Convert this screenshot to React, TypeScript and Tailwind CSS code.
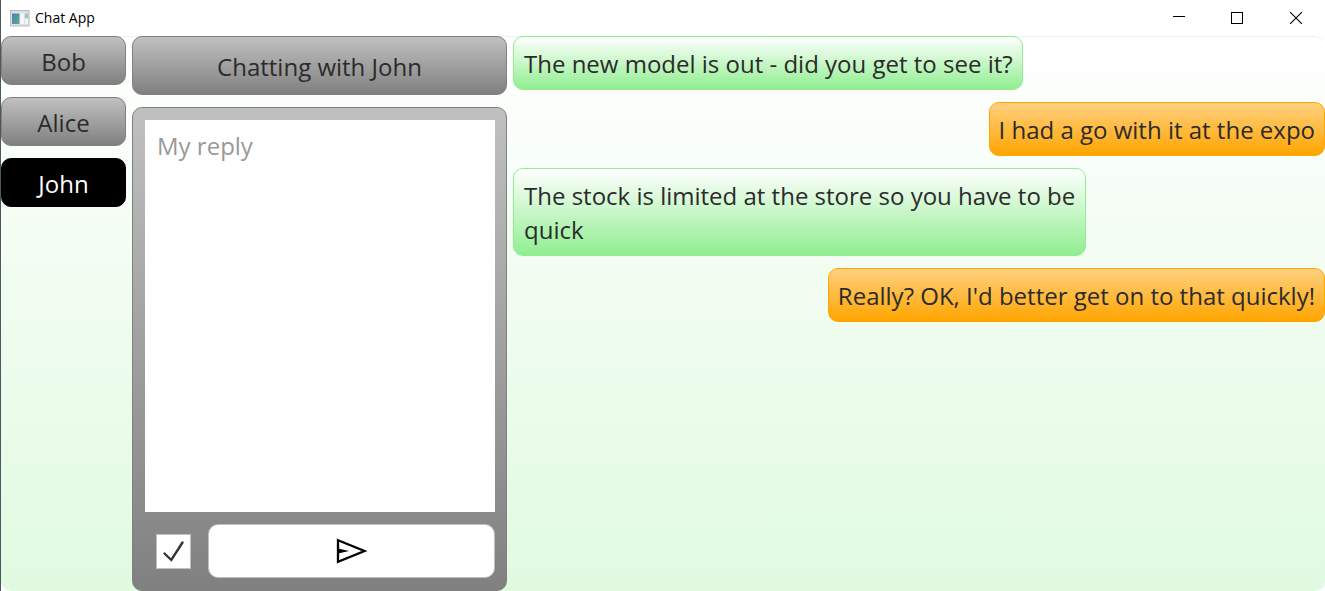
import { useState } from "react";

type Message = { from: "them" | "me"; text: string };

const contacts = ["Bob", "Alice", "John"];

const messages: Message[] = [
  { from: "them", text: "The new model is out - did you get to see it?" },
  { from: "me", text: "I had a go with it at the expo" },
  { from: "them", text: "The stock is limited at the store so you have to be quick" },
  { from: "me", text: "Really? OK, I'd better get on to that quickly!" },
];

function AppIcon() {
  return (
    <svg width="20" height="17" viewBox="0 0 20 17" aria-hidden="true">
      <defs>
        <linearGradient id="pane" x1="0" y1="0" x2="1" y2="1">
          <stop offset="0" stopColor="#4a80b4" />
          <stop offset="1" stopColor="#55b08a" />
        </linearGradient>
      </defs>
      <rect x="0.5" y="0.5" width="18.5" height="15.5" fill="#dfe0e4" stroke="#b9bbc0" />
      <rect x="2" y="3.5" width="7.5" height="10.5" fill="url(#pane)" />
      <rect x="10" y="3.5" width="4" height="10.5" fill="#f5f5f5" />
      <rect x="15" y="3.5" width="3" height="5" fill="#9fc6c4" />
      <rect x="15" y="8.5" width="3" height="5.5" fill="#f5f5f5" />
    </svg>
  );
}

function TitleBar() {
  return (
    <header className="flex h-9 items-center bg-white pl-[9px]">
      <AppIcon />
      <h1 className="ml-[5px] flex-1 text-[14px] leading-5 text-black">Chat App</h1>
      <div className="flex h-full">
        <button aria-label="Minimize" className="grid w-[58px] place-items-center">
          <svg width="12" height="12" shapeRendering="crispEdges">
            <path d="M0 4.5H12" stroke="#000" />
          </svg>
        </button>
        <button aria-label="Maximize" className="grid w-[58px] place-items-center">
          <svg width="12" height="12" shapeRendering="crispEdges">
            <rect x="0.5" y="0.5" width="11" height="11" fill="none" stroke="#000" />
          </svg>
        </button>
        <button aria-label="Close" className="grid w-[59px] place-items-center">
          <svg width="12" height="12">
            <path d="M0 0L12 12M12 0L0 12" stroke="#000" strokeWidth="1.1" />
          </svg>
        </button>
      </div>
    </header>
  );
}

export default function App() {
  const [active, setActive] = useState("John");
  const [reply, setReply] = useState("");
  const [checked, setChecked] = useState(true);

  return (
    <div className="flex min-h-screen flex-col border-l border-[#4a5862] bg-white font-['Open_Sans','Noto_Sans',sans-serif] text-[#2b2b2b]">
      <TitleBar />
      <main className="grid flex-1 grid-cols-[125px_375px_minmax(0,1fr)] gap-x-[6px] rounded-[10px] border-t border-[#e0fae0] bg-linear-to-b/srgb from-white to-[#e0fae0] text-2xl leading-[34px]">
        <nav aria-label="Contacts" className="-mt-px flex flex-col gap-3">
          {contacts.map((name) => (
            <button
              key={name}
              onClick={() => setActive(name)}
              className={
                name === active
                  ? "h-[49px] rounded-[10px] border border-black bg-black pt-[2px] text-white"
                  : "h-[49px] rounded-[10px] border border-[#808080] bg-linear-to-b/srgb from-[#c0c0c0] to-[#808080] pt-[2px]"
              }
            >
              {name}
            </button>
          ))}
        </nav>

        <section className="-mt-px flex flex-col gap-3">
          <h2 className="flex h-[59px] items-center justify-center rounded-[10px] border border-[#808080] bg-linear-to-b/srgb from-[#c0c0c0] to-[#808080] pt-[2px]">
            Chatting with {active}
          </h2>
          <form
            onSubmit={(e) => e.preventDefault()}
            className="flex flex-1 flex-col gap-3 rounded-[10px] border border-[#808080] bg-linear-to-b/srgb from-[#c0c0c0] to-[#808080] py-3 pr-[11px] pl-3"
          >
            <textarea
              aria-label="My reply"
              placeholder="My reply"
              value={reply}
              onChange={(e) => setReply(e.target.value)}
              className="min-h-0 flex-1 resize-none bg-white px-3 py-[9px] outline-none placeholder:text-[#999999]"
            />
            <div className="flex items-center gap-[17px] pl-[11px]">
              <span className="grid size-[35px] shrink-0">
                <input
                  type="checkbox"
                  aria-label="Send on enter"
                  checked={checked}
                  onChange={(e) => setChecked(e.target.checked)}
                  className="peer col-start-1 row-start-1 size-[35px] appearance-none border border-[#c0c0c0] bg-white"
                />
                <svg
                  viewBox="0 0 35 35"
                  className="pointer-events-none invisible col-start-1 row-start-1 peer-checked:visible"
                >
                  <path
                    d="M8.5 19.5L15.3 26L26.5 8.5"
                    fill="none"
                    stroke="#333"
                    strokeWidth="2.4"
                    strokeLinecap="round"
                  />
                </svg>
              </span>
              <button
                aria-label="Send"
                className="grid h-[54px] flex-1 place-items-center rounded-[10px] border border-[#c0c0c0] bg-white"
              >
                <svg width="32" height="26" viewBox="0 0 32 26">
                  <path d="M2 2.3L28.5 13L2 23.7Z" fill="none" stroke="#000" strokeWidth="2.3" />
                  <path d="M2 10.5L13 13L2 15.5Z" fill="#000" />
                </svg>
              </button>
            </div>
          </form>
        </section>

        <ol className="-mt-px flex flex-col gap-3">
          {messages.map((m) => (
            <li
              key={m.text}
              className={
                m.from === "me"
                  ? "max-w-[calc(70%+5px)] self-end rounded-[10px] border border-[#ffa500] bg-linear-to-b/srgb from-[#ffd080] to-[#ffa500] px-[9px] pt-[10px] pb-2"
                  : "max-w-[calc(70%+5px)] self-start rounded-[10px] border border-[#90ee90] bg-linear-to-b/srgb from-white to-[#90ee90] pt-[10px] pr-[9px] pb-2 pl-[10px]"
              }
            >
              {m.text}
            </li>
          ))}
        </ol>
      </main>
    </div>
  );
}
